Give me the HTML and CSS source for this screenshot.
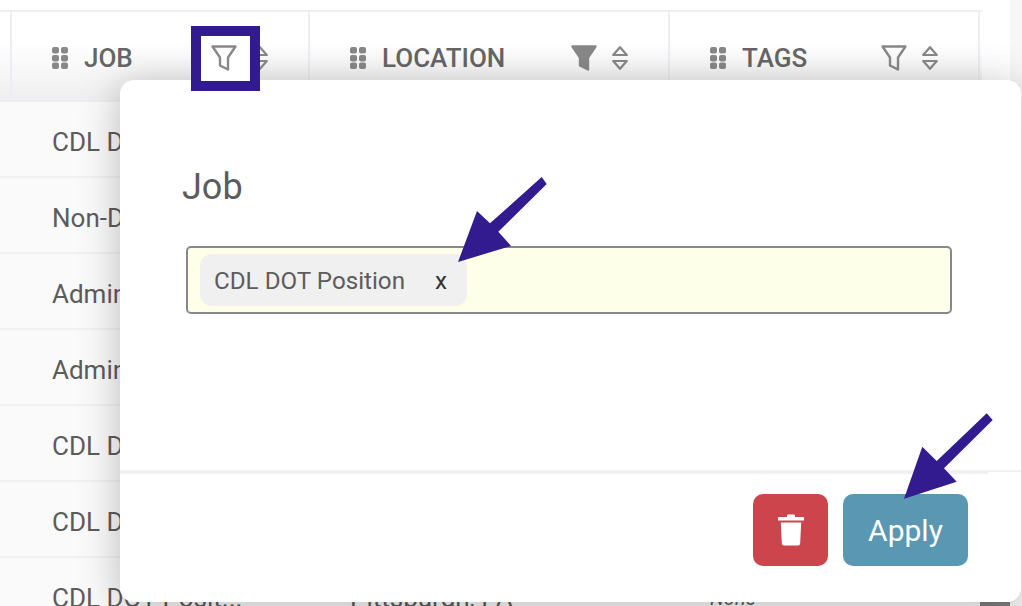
FILE: index.html
```html
<!DOCTYPE html>
<html lang="en">
<head>
    <meta charset="UTF-8">
    <meta name="viewport" content="width=device-width, initial-scale=1.0">
    <title>Job filter</title>
    <link rel="stylesheet" href="styles.css">
</head>
<body>
    <svg class="icon-defs" width="0" height="0">
        <symbol id="grip" viewBox="0 0 16 22">
            <rect x="0" y="0" width="7" height="6.5" rx="2"/><rect x="9" y="0" width="7" height="6.5" rx="2"/>
            <rect x="0" y="8" width="7" height="6.5" rx="2"/><rect x="9" y="8" width="7" height="6.5" rx="2"/>
            <rect x="0" y="15.5" width="7" height="6.5" rx="2"/><rect x="9" y="15.5" width="7" height="6.5" rx="2"/>
        </symbol>
        <symbol id="funnel" viewBox="0 0 26 26">
            <path d="M1.5 1.5H24.5L17 12.5V24.5L9 20.5V12.5Z" stroke-width="2.4" stroke-linejoin="round"/>
        </symbol>
        <symbol id="sort" viewBox="0 0 16 24">
            <path d="M8 1.2L14.8 9H1.2Z M1.2 15H14.8L8 22.8Z" fill="none" stroke="#888" stroke-width="2.2" stroke-linejoin="round"/>
        </symbol>
    </svg>

    <div class="page">
        <div class="table">
            <div class="head">
                <div class="stub"></div>
                <div class="th">
                    <svg class="grip"><use href="#grip"/></svg><span>JOB</span>
                    <svg class="funnel lifted"><use href="#funnel"/></svg>
                    <svg class="sort"><use href="#sort"/></svg>
                </div>
                <div class="th">
                    <svg class="grip"><use href="#grip"/></svg><span>LOCATION</span>
                    <svg class="funnel solid"><use href="#funnel"/></svg>
                    <svg class="sort"><use href="#sort"/></svg>
                </div>
                <div class="th">
                    <svg class="grip"><use href="#grip"/></svg><span>TAGS</span>
                    <svg class="funnel"><use href="#funnel"/></svg>
                    <svg class="sort"><use href="#sort"/></svg>
                </div>
            </div>
            <div class="row"><div></div><div class="td">CDL DOT Position</div><div class="td">Pittsburgh, PA</div><div class="td none">None</div></div>
            <div class="row"><div></div><div class="td">Non-DOT Position</div><div class="td">Pittsburgh, PA</div><div class="td none">None</div></div>
            <div class="row"><div></div><div class="td">Admin Staff</div><div class="td">Pittsburgh, PA</div><div class="td none">None</div></div>
            <div class="row"><div></div><div class="td">Admin Staff</div><div class="td">Pittsburgh, PA</div><div class="td none">None</div></div>
            <div class="row"><div></div><div class="td">CDL DOT Position</div><div class="td">Pittsburgh, PA</div><div class="td none">None</div></div>
            <div class="row"><div></div><div class="td">CDL DOT Position</div><div class="td">Pittsburgh, PA</div><div class="td none">None</div></div>
            <div class="row"><div></div><div class="td">CDL DOT Posit...</div><div class="td">Pittsburgh, PA</div><div class="td none">None</div></div>
        </div>
        <div class="track"></div>
    </div>
    <div class="thumb"></div>

    <div class="modal">
        <div class="modal-body">
            <h2>Job</h2>
            <div class="tag-input">
                <span class="tag">CDL DOT Position <span class="tag-x">x</span></span>
            </div>
        </div>
        <div class="modal-foot">
            <div class="foot-rule"></div>
            <div class="foot-btns">
                <button class="btn btn-del" type="button">
                    <svg width="26" height="32" viewBox="0 0 26 32"><path d="M9 3V1.6Q9 .4 10.2 .4H15.8Q17 .4 17 1.6V3H25Q26 3 26 4V6.5H0V4Q0 3 1 3Z M2.8 8.5H23.2L22.2 29Q22 31.6 19.4 31.6H6.6Q4 31.6 3.8 29Z" fill="#fff"/></svg>
                </button>
                <button class="btn btn-apply" type="button">Apply</button>
            </div>
        </div>
    </div>

    <!-- annotations drawn on top of the screenshot -->
    <div class="callout"></div>
    <svg class="arrows" width="1022" height="606" viewBox="0 0 1022 606">
        <polygon points="541.7,177 546.7,184 498.3,231.7 511,246 458,262 477,211 490,223.3"/>
        <polygon points="986.7,413.3 992.7,420 944,468.3 956.7,481.7 904,498.7 922.3,446.7 936.7,461"/>
    </svg>
</body>
</html>
```

FILE: styles.css
```css
body {
    margin: 0;
    height: 606px;
    overflow: hidden;
    background-color: #fff;
    color: #5c5c5c;
    font-family: Roboto, "Liberation Sans", sans-serif;
}
.icon-defs {
    position: absolute;
}
.page {
    display: flex;
    height: 606px;
}
.table {
    width: 982px;
    margin-right: 28px;
    padding-top: 10px;
    flex-shrink: 0;
}
.track {
    flex: 1;
    background-color: #f7f7f7;
}
.thumb {
    position: absolute;
    left: 980px;
    top: 602px;
    width: 30px;
    height: 4px;
    background-color: #7f7f7f;
}
.head, .row {
    display: grid;
    grid-template-columns: 12px 298px 360px 310px;
}
.head {
    height: 88px;
    border-top: 2px solid #eeeef2;
    border-bottom: 2px solid #eeeef2;
    background: linear-gradient(#fff 35%, #efefef);
}
.stub, .th {
    border-right: 2px solid #eeeef2;
}
.th {
    display: flex;
    align-items: center;
    padding: 3px 40px 0;
    color: #666;
    font-size: 26px;
    font-weight: 500;
}
.th span {
    flex: 1;
    margin: 1px 0 0 16px;
}
.grip {
    width: 16px;
    height: 22px;
    fill: #888;
}
.funnel {
    width: 26px;
    height: 26px;
    margin-right: 15px;
    fill: none;
    stroke: #888;
}
.funnel.solid {
    fill: #888;
}
/* stays above the white inside of the callout */
.funnel.lifted {
    position: relative;
    z-index: 3;
}
.sort {
    width: 16px;
    height: 24px;
}
.row {
    height: 74px;
    border-bottom: 2px solid #eff2f1;
    background-color: #fafafa;
    font-size: 26px;
}
.td {
    display: flex;
    align-items: center;
    padding: 5px 0 0 40px;
    white-space: nowrap;
}
.none {
    font-size: 20px;
    font-style: italic;
}
.modal {
    position: absolute;
    left: 120px;
    top: 80px;
    width: 901px;
    height: 522px;
    display: flex;
    flex-direction: column;
    background-color: #fff;
    border-radius: 14px;
    box-shadow: 0 5px 40px rgba(0, 0, 0, 0.26);
}
.modal-body {
    flex: 1;
    padding: 86px 69px 0 62px;
}
h2 {
    margin: 0 0 38px;
    font-size: 36px;
    font-weight: 400;
    line-height: 42px;
}
.tag-input {
    display: flex;
    align-items: center;
    height: 64px;
    margin-left: 4px;
    padding-left: 12px;
    border: 2px solid #888;
    border-radius: 5px;
    background-color: #feffe9;
}
.tag {
    display: flex;
    align-items: center;
    height: 51px;
    padding: 1px 20px 0 14px;
    border-radius: 12px;
    background-color: #f0f0f0;
    font-size: 24.2px;
}
.tag-x {
    margin-left: 30px;
    color: #333;
}
.modal-foot {
    border-top: 2px solid #eff2f1;
}
.foot-rule {
    height: 2px;
    margin-right: 33px;
    background-color: #eff2f1;
}
.foot-btns {
    display: flex;
    justify-content: flex-end;
    gap: 15px;
    padding: 20px 53px 36px 0;
}
.btn {
    height: 72px;
    border: none;
    border-radius: 10px;
    color: #fff;
    font-family: inherit;
    font-size: 30px;
}
.btn-del {
    display: flex;
    align-items: center;
    justify-content: center;
    width: 75px;
    background-color: #cc444c;
}
.btn-apply {
    width: 125px;
    padding-top: 1px;
    background-color: #5a97b3;
}
.callout {
    position: absolute;
    z-index: 2;
    left: 191px;
    top: 26px;
    width: 49px;
    height: 45px;
    border: 10px solid #321b8e;
    background-color: #fff;
}
.arrows {
    position: absolute;
    z-index: 2;
    left: 0;
    top: 0;
    fill: #321b8e;
}
```
